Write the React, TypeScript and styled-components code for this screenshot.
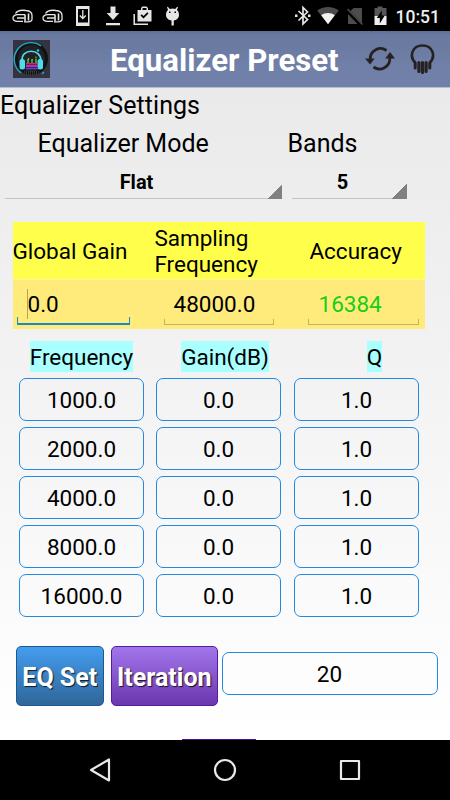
import React from 'react';
import styled, { createGlobalStyle } from 'styled-components';

const GlobalStyle = createGlobalStyle`
  * { box-sizing: border-box; }
  body { margin: 0; background: #000; font-family: Roboto, sans-serif; color: #000; }
  svg { display: block; flex: none; }
`;

const Screen = styled.div`
  width: 450px;
  height: 800px;
  display: flex;
  flex-direction: column;
  overflow: hidden;
`;

const StatusBar = styled.div`
  height: 31px;
  background: #000;
  flex: none;
`;

const TitleBar = styled.header`
  height: 57px;
  flex: none;
  display: flex;
  align-items: center;
  padding: 0 0 0 13px;
  background: linear-gradient(#5f6f97 0, #6a799f 4px, #6b7ba2 18px, #7180a8 36px, #7180a8 100%);
  border-bottom: 1px solid #b7bed3;
`;

const Title = styled.h1`
  margin: 4px 0 0 60px;
  width: 254px;
  font-size: 31.200px;
  line-height: 36px;
  font-weight: 700;
  color: #fff;
  white-space: nowrap;
`;

const Content = styled.main`
  height: 652px;
  flex: none;
  padding-top: 3px;
  display: flex;
  flex-direction: column;
  background: linear-gradient(#eaeaea, #f4f4f4 50%, #fcfcfc 85%, #fff);
`;

const SectionTitle = styled.div`
  height: 38px;
  font-size: 25px;
  letter-spacing: 0.05px;
  line-height: 29px;
  white-space: nowrap;
`;

const Selectors = styled.div`
  display: flex;
  gap: 10px;
  padding-left: 5px;
  height: 93px;
`;

const Selector = styled.div<{ $width: number }>`
  width: ${(p) => p.$width}px;
`;

const SelectorLabel = styled.div<{ $indent: number }>`
  margin-left: ${(p) => p.$indent}px;
  font-size: 25px;
  line-height: 29px;
  white-space: nowrap;
`;

const Spinner = styled.div`
  height: 29px;
  margin-top: 12px;
  padding-right: 14px;
  text-align: center;
  font-size: 20px;
  line-height: 25px;
  font-weight: 700;
  background:
    linear-gradient(135deg, transparent 50%, #808080 50%) right bottom / 15px 15px no-repeat,
    linear-gradient(#c4c4c4, #c4c4c4) left bottom / 100% 1px no-repeat;
`;

const GlobalPanel = styled.section`
  width: 412px;
  height: 107px;
  margin-left: 13px;
  display: grid;
  grid-template-rows: 57px 49px;
  row-gap: 1px;
  background: #fff5a0;
  font-size: 22.5px;
`;

const PanelHead = styled.div`
  display: grid;
  grid-template-columns: 142px 155px 115px;
  align-items: center;
  line-height: 26px;
  background: #ffff4b;
  padding-top: 1px;
`;

const PanelLabel = styled.span`
  margin-left: -0.6px;
`;

const PanelFields = styled.div`
  display: grid;
  grid-template-columns: 114px 111px 112px;
  column-gap: 33px;
  padding-left: 4px;
  background: #ffeb7c;
`;

const LineField = styled.div<{ $active?: boolean; $green?: boolean; $pad: number }>`
  position: relative;
  height: 45px;
  padding: 11px 0 0 ${(p) => p.$pad}px;
  line-height: 26px;
  color: ${(p) => (p.$green ? '#16cf16' : '#000')};
  &::after {
    content: '';
    position: absolute;
    left: 0;
    right: 1px;
    bottom: 0;
    height: ${(p) => (p.$active ? 6 : 5)}px;
    border: solid ${(p) => (p.$active ? '#168bc4' : '#c0b55f')};
    border-width: ${(p) => (p.$active ? '0 1px 2px' : '0 1px 1px')};
  }
`;

const Caret = styled.span`
  position: absolute;
  left: 10px;
  top: 9px;
  width: 1px;
  height: 30px;
  background: #b3a553;
`;

const Bands = styled.section`
  margin: 12px 0 0 19px;
  display: grid;
  grid-template-columns: 125px 126px 125px;
  grid-template-rows: 31px;
  grid-auto-rows: 43px;
  gap: 6px 12px;
  justify-items: center;
  font-size: 22.5px;
`;

const ColumnLabel = styled.div<{ $shift?: number }>`
  margin-left: ${(p) => p.$shift ?? 0}px;
  background: #aff;
  line-height: 33px;
  height: 31px;
`;

const Field = styled.div`
  justify-self: start;
  width: 125px;
  height: 43px;
  border: 1px solid #2389df;
  border-radius: 7px;
  text-align: center;
  font-size: 22.5px;
  line-height: 43px;
`;

const Actions = styled.section`
  display: flex;
  margin: 29px 0 0 16px;
  height: 60px;
`;

const ActionButton = styled.button<{ $purple?: boolean }>`
  width: ${(p) => (p.$purple ? 106.500 : 87.500)}px;
  height: 60px;
  margin-right: ${(p) => (p.$purple ? 4 : 7.500)}px;
  padding: 2px 0 0;
  border: 1px solid ${(p) => (p.$purple ? '#551ba0' : '#1b5a8e')};
  border-radius: 5px;
  background: ${(p) =>
    p.$purple ? 'linear-gradient(#a276eb, #6c36ae)' : 'linear-gradient(#449def, #2f6699)'};
  color: #fff;
  font: 700 25px Roboto, sans-serif;
  text-shadow: 1px 1px 1px rgba(0, 0, 0, 0.8);
  white-space: nowrap;
`;

const IterationField = styled(Field)`
  width: 216px;
  margin-top: 6px;
`;

const NextButtonEdge = styled.div`
  width: 74px;
  height: 1px;
  margin: auto 0 0 182px;
  background: #4f0fa5;
`;

const NavBar = styled.nav`
  height: 60px;
  background: #000;
  flex: none;
`;

const StatusIcons = () => (
  <svg width="450" height="31" viewBox="0 0 450 31" fill="none" stroke="#e6e6e6">
    {[0, 30].map((x) => (
      <g key={x} transform={`translate(${x} 0)`} strokeWidth="1.3">
        <path d="M23 21.300H17.500c-2.500 0-4.500-1.300-4.500-3.300s2-3.300 4.500-3.300H25M17 18h7.500" />
        <path d="M15.500 13.500c2-3.500 7-3.500 10.500-3 4 .3 6 2.500 6 5v3.500c0 2-1.500 2.800-4 2.800h-4" />
        <path d="M25 14.500v7M28.500 13.500v7" strokeWidth="1.600" />
      </g>
    ))}
    <path fill="#e6e6e6" stroke="none" fillRule="evenodd" d="M76 6h13.500v20H76zM78 9v13.500h10V9z" />
    <path d="M82.800 10v8M79.800 15.500l3 3 3-3" strokeWidth="1.300" />
    <path fill="#e6e6e6" stroke="none" d="M110.500 6.500h5V13h3.800l-6.300 7-6.300-7h3.800zM106 23h14v2.200h-14z" />
    <path d="M134.200 14v10.200H148" strokeWidth="1.500" />
    <path fill="#e6e6e6" stroke="none" fillRule="evenodd" d="M141 10V8l1.500-1.500h4L148 8v2h3.500v11.500H137.500V10zM142.500 10h4V8h-4zM140.500 15.500l3 3 5-5-1.200-1.200-3.800 3.800-1.800-1.800z" />
    <path fill="#e6e6e6" stroke="none" fillRule="evenodd" d="M168 10l-1-3 .8-.3 2 2.300a8 8 0 0 1 5.400 0l2-2.300.8.300-1 3c1.500 1.200 2 3 2 5 0 3.200-2.500 5-5.200 5.500v5h-2.300v-5c-2.700-.5-5.500-2.300-5.500-5.500 0-2 .5-3.800 2-5zM169 11.500v1.500h1.500v-1.500zM174.500 11.500v1.500h1.500v-1.500z" />
    <path d="M298.500 11l9 8.500-4.500 4.500V7.500l4.500 4.500-9 8.500" strokeWidth="1.700" />
    <path fill="#e6e6e6" stroke="none" d="M295 14.500h2.500V17H295zM308 14.500h2.500V17H308z" />
    <path fill="#4c4c4c" stroke="none" d="M317.200 10.500c6-4.700 15.600-4.700 21.600 0L328 24.300z" />
    <path fill="#f2f2f2" stroke="none" d="M321.200 15.300c4-3 9.600-3 13.600 0L328 24.300z" />
    <path fill="#4c4c4c" stroke="none" d="M353.500 8H362v15l-11.500-12zM348 14l9.500 10H348z" />
    <path stroke="#4c4c4c" strokeWidth="1.600" d="M347.500 9l15 15.500" />
    <path fill="#565656" stroke="none" d="M377.500 6.500h5V8h4v8h-12V8h3z" />
    <path fill="#efefef" stroke="none" d="M374.500 16h12v9h-12z" />
    <path fill="#000" stroke="none" d="M381.800 10.500v5h3l-5 8v-5.500h-3z" />
    <text x="395.500" y="22.700" fontFamily="Roboto" fontSize="17.500" fontWeight="500" fill="#eee" stroke="none">10:51</text>
  </svg>
);

const AppLogo = () => (
  <svg width="37" height="38" viewBox="0 0 37 38" fill="none">
    <path fill="#343440" d="M0 0h37v38H0z" />
    <circle cx="18.500" cy="18.500" r="15" fill="#202225" stroke="#101216" strokeWidth="3" />
    <path d="M8 33A16.500 16.500 0 0 1 28 6" stroke="#20adc4" strokeWidth="1.300" />
    <path d="M31 32l-2 2" stroke="#20adc4" strokeWidth="1.500" />
    <path d="M9 21C8 8 28 8 28 21" stroke="#4cdcec" strokeWidth="1.600" />
    <rect x="6.500" y="19" width="5.500" height="10.500" rx="2.500" fill="#4cdcec" />
    <rect x="24.500" y="19" width="5.500" height="10.500" rx="2.500" fill="#4cdcec" />
    <circle cx="25" cy="10.500" r="1.200" fill="#30cfe0" />
    <path d="M15 23v-4M19 23v-4M23 23v-4" stroke="#19a754" strokeWidth="2" />
    <path d="M15.500 20v-2M19.500 20v-1M23 18.500v-2" stroke="#c39226" strokeWidth="1.200" />
    <path d="M13 23.700h11.500" stroke="#df2458" strokeWidth="1.500" />
    <path d="M13 26h11.500" stroke="#d229d2" strokeWidth="1.800" />
    <path d="M13 28.500h11.500" stroke="#5644d7" strokeWidth="1.600" />
    <path d="M11 32h15M13 34h11" stroke="#56604a" strokeWidth="1" strokeDasharray="1 1" />
  </svg>
);

const RefreshIcon = () => (
  <svg width="30" height="28" viewBox="0 0 30 28" fill="none" stroke="#262222" strokeWidth="2.800">
    <path d="M5.200 14A10.300 10.300 0 0 1 21.500 5.500" />
    <path d="M24.800 13A10.300 10.300 0 0 1 8.500 22" />
    <path fill="#262222" stroke="none" d="M0 13.500h9.700l-4.600 6zM20.200 13.500H30l-5-6.500z" />
  </svg>
);

const HeadphonesIcon = () => (
  <svg width="26" height="32" viewBox="0 0 26 32" fill="none" stroke="#262222">
    <path d="M5.500 20C-1.500 13 2.500 2.500 12.500 2.500s14 10.500 7 17.500" strokeWidth="2.600" />
    <path d="M5.200 20v5M19.800 20v5" strokeWidth="3" strokeLinecap="round" />
    <path d="M8.900 19.500v9M12.500 19.500v10M16.100 19.500v9" strokeWidth="3.200" strokeLinecap="round" />
  </svg>
);

const TitleActions = styled.div`
  display: flex;
  gap: 15px;
  align-items: center;
  margin-left: 1px;
`;

const NavIcons = () => (
  <svg width="450" height="60" viewBox="0 0 450 60" fill="none" stroke="#e8e8e8" strokeWidth="2.200" strokeLinejoin="round">
    <path d="M109 19.500v21L91 30z" />
    <circle cx="225" cy="30" r="10" />
    <path d="M341 21h18v18h-18z" />
  </svg>
);

const frequencies = ['1000.0', '2000.0', '4000.0', '8000.0', '16000.0'];

export default function App() {
  return (
    <Screen>
      <GlobalStyle />
      <StatusBar><StatusIcons /></StatusBar>
      <TitleBar>
        <AppLogo />
        <Title>Equalizer Preset</Title>
        <TitleActions>
          <RefreshIcon />
          <HeadphonesIcon />
        </TitleActions>
      </TitleBar>
      <Content>
        <SectionTitle>Equalizer Settings</SectionTitle>
        <Selectors>
          <Selector $width={277}>
            <SelectorLabel $indent={32.5}>Equalizer Mode</SelectorLabel>
            <Spinner>Flat</Spinner>
          </Selector>
          <Selector $width={115}>
            <SelectorLabel $indent={-4.5}>Bands</SelectorLabel>
            <Spinner>5</Spinner>
          </Selector>
        </Selectors>
        <GlobalPanel>
          <PanelHead>
            <PanelLabel>Global Gain</PanelLabel>
            <PanelLabel>Sampling<br />Frequency</PanelLabel>
            <PanelLabel>Accuracy</PanelLabel>
          </PanelHead>
          <PanelFields>
            <LineField $active $pad={10.5}><Caret />0.0</LineField>
            <LineField $pad={9.5}>48000.0</LineField>
            <LineField $green $pad={10.5}>16384</LineField>
          </PanelFields>
        </GlobalPanel>
        <Bands>
          <ColumnLabel>Frequency</ColumnLabel>
          <ColumnLabel $shift={12}>Gain(dB)</ColumnLabel>
          <ColumnLabel $shift={36}>Q</ColumnLabel>
          {frequencies.map((frequency) => (
            <React.Fragment key={frequency}>
              <Field>{frequency}</Field>
              <Field>0.0</Field>
              <Field>1.0</Field>
            </React.Fragment>
          ))}
        </Bands>
        <Actions>
          <ActionButton>EQ Set</ActionButton>
          <ActionButton $purple>Iteration</ActionButton>
          <IterationField>20</IterationField>
        </Actions>
        <NextButtonEdge />
      </Content>
      <NavBar><NavIcons /></NavBar>
    </Screen>
  );
}
